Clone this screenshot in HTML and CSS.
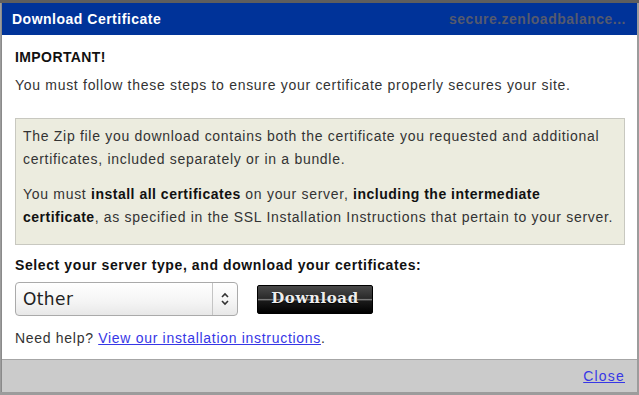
FILE: index.html
```html
<!DOCTYPE html>
<html>
<head>
<meta charset="utf-8">
<link rel="stylesheet" href="styles.css">
</head>
<body>
<div class="screen">
  <div class="dialog">
    <div class="titlebar">
      <span class="title">Download Certificate</span>
      <span class="host">secure.zenloadbalance...</span>
    </div>
    <div class="content">
      <p class="important">IMPORTANT!</p>
      <p class="intro">You must follow these steps to ensure your certificate properly secures your site.</p>
      <div class="notice">
        <p>The Zip file you download contains both the certificate you requested and additional certificates, included separately or in a bundle.</p>
        <p>You must <b>install all certificates</b> on your server, <b>including the intermediate certificate</b>, as specified in the SSL Installation Instructions that pertain to your server.</p>
      </div>
      <p class="select-label">Select your server type, and download your certificates:</p>
      <div class="controls">
        <div class="select">
          <span class="select-value">Other</span>
          <span class="select-arrows">
            <svg width="10" height="14" viewBox="0 0 10 14"><path d="M2 5 L5 2 L8 5 M2 9 L5 12 L8 9" fill="none" stroke="#333" stroke-width="1.6"/></svg>
          </span>
        </div>
        <button class="download">Download</button>
      </div>
      <p class="help">Need help? <a href="#">View our installation instructions</a>.</p>
    </div>
    <div class="footer">
      <a href="#" class="close">Close</a>
    </div>
  </div>
</div>
</body>
</html>
```

FILE: styles.css
```css
html, body {
  margin: 0;
  padding: 0;
}
body {
  width: 639px;
  height: 395px;
  overflow: hidden;
  font-family: "Liberation Sans", Arial, sans-serif;
  font-size: 14px;
  color: #333;
}
.screen {
  box-sizing: border-box;
  width: 639px;
  height: 395px;
  background: #9c9c9c;
  border-top: 3px solid #5e5e5e;
  padding-left: 1px;
}
.dialog {
  width: 636px;
  height: 389px;
  background: #fff;
  display: flex;
  flex-direction: column;
  border-left: 1px solid #8a8a8a;
  box-sizing: border-box;
}
.titlebar {
  height: 32px;
  background: #003399;
  display: flex;
  align-items: center;
  justify-content: space-between;
  padding: 0 11px 0 10px;
  font-weight: bold;
  line-height: 32px;
  letter-spacing: 0.5px;
}
.title {
  color: #fff;
}
.host {
  color: #555a6e;
}
.content {
  flex: 1;
  padding: 11px 12px 0 13px;
  line-height: 22px;
  letter-spacing: 0.7px;
}
.content p {
  margin: 0;
}
.content b {
  letter-spacing: 0.5px;
}
.important {
  font-weight: bold;
  color: #111;
  letter-spacing: 0.4px;
}
.intro {
  margin-top: 6px !important;
}
.notice {
  margin-top: 22px;
  background: #ececdf;
  border: 1px solid #c8c8c0;
  padding: 6px 8px 3px 7px;
  line-height: 23px;
}
.notice p {
  margin: 0 0 12px;
}
.notice b {
  color: #111;
}
.select-label {
  margin-top: 9px !important;
  font-weight: bold;
  color: #111;
  letter-spacing: 0.6px;
}
.controls {
  margin-top: 6px;
  display: flex;
  align-items: center;
  gap: 19px;
}
.select {
  box-sizing: border-box;
  width: 223px;
  height: 34px;
  border: 1px solid #aaa;
  border-radius: 4px;
  background: linear-gradient(#ffffff, #f4f4f4 60%, #e8e8e8);
  display: flex;
  align-items: stretch;
}
.select-value {
  flex: 1;
  font-family: "DejaVu Sans", sans-serif;
  font-size: 17px;
  color: #222;
  line-height: 32px;
  padding-left: 7px;
  letter-spacing: 0.4px;
}
.select-arrows {
  width: 24px;
  border-left: 1px solid #c4c4c4;
  display: flex;
  align-items: center;
  justify-content: center;
}
.download {
  box-sizing: border-box;
  width: 116px;
  height: 29px;
  border: 1px solid #000;
  border-radius: 2px;
  background: linear-gradient(#4a4a4a, #2a2a2a 46%, #7a7a7a 50%, #1a1a1a 56%, #000);
  color: #eeeeee;
  font-family: "DejaVu Serif", serif;
  font-weight: bold;
  font-size: 15px;
  padding: 0 0 2px;
  letter-spacing: 0.6px;
  text-shadow: 0 1px 1px #000;
}
.help {
  margin-top: 11px !important;
}
a {
  color: #3737e6;
  text-decoration: underline;
}
.footer {
  height: 33px;
  box-sizing: border-box;
  background: #cbcbcb;
  border-top: 1px solid #a6a6a6;
  display: flex;
  align-items: center;
  justify-content: flex-end;
  padding-right: 12px;
  line-height: 22px;
}
.close {
  letter-spacing: 1.2px;
}
```
